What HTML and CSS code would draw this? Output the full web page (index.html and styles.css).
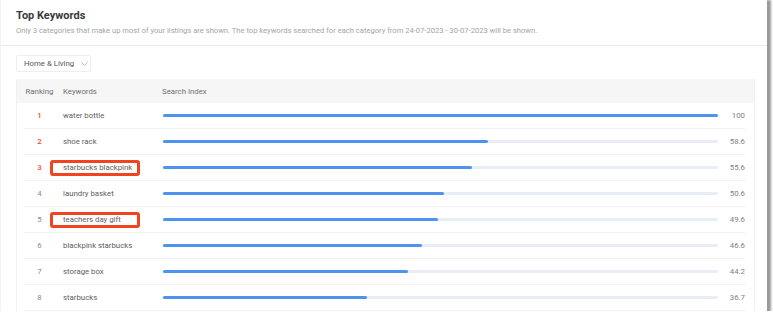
FILE: index.html
```html
<!DOCTYPE html>
<html>
<head>
<meta charset="utf-8">
<link rel="stylesheet" href="styles.css">
</head>
<body>
<div class="frame">
  <div class="head">
    <div class="title">Top Keywords</div>
    <div class="sub">Only 3 categories that make up most of your listings are shown. The top keywords searched for each category from 24-07-2023 - 30-07-2023 will be shown.</div>
  </div>
  <div class="content">
    <div class="dropdown">
      <span>Home &amp; Living</span>
      <svg class="chev" width="7" height="4" viewBox="0 0 7 4"><polyline points="0.5,0.5 3.5,3.3 6.5,0.5" fill="none" stroke="#aaa" stroke-width="0.8"/></svg>
    </div>
    <div class="table">
      <div class="thead grid">
        <div class="c-rank">Ranking</div>
        <div class="c-kw">Keywords</div>
        <div class="c-bar">Search Index</div>
        <div class="c-val"></div>
      </div>
      <div class="row grid"><div class="c-rank top">1</div><div class="c-kw">water bottle</div><div class="c-bar"><div class="track"><div class="fill" style="width:100%"></div></div></div><div class="c-val">100</div></div>
      <div class="row grid"><div class="c-rank top">2</div><div class="c-kw">shoe rack</div><div class="c-bar"><div class="track"><div class="fill" style="width:58.6%"></div></div></div><div class="c-val">58.6</div></div>
      <div class="row grid"><div class="c-rank top">3</div><div class="c-kw">starbucks blackpink<span class="mark"></span></div><div class="c-bar"><div class="track"><div class="fill" style="width:55.6%"></div></div></div><div class="c-val">55.6</div></div>
      <div class="row grid"><div class="c-rank">4</div><div class="c-kw">laundry basket</div><div class="c-bar"><div class="track"><div class="fill" style="width:50.6%"></div></div></div><div class="c-val">50.6</div></div>
      <div class="row grid"><div class="c-rank">5</div><div class="c-kw">teachers day gift<span class="mark"></span></div><div class="c-bar"><div class="track"><div class="fill" style="width:49.6%"></div></div></div><div class="c-val">49.6</div></div>
      <div class="row grid"><div class="c-rank">6</div><div class="c-kw">blackpink starbucks</div><div class="c-bar"><div class="track"><div class="fill" style="width:46.6%"></div></div></div><div class="c-val">46.6</div></div>
      <div class="row grid"><div class="c-rank">7</div><div class="c-kw">storage box</div><div class="c-bar"><div class="track"><div class="fill" style="width:44.2%"></div></div></div><div class="c-val">44.2</div></div>
      <div class="row grid"><div class="c-rank">8</div><div class="c-kw">starbucks</div><div class="c-bar"><div class="track"><div class="fill" style="width:36.7%"></div></div></div><div class="c-val">36.7</div></div>
    </div>
  </div>
</div>
</body>
</html>
```
FILE: styles.css
```css
html, body {
  margin: 0;
  padding: 0;
  background: #ffffff;
}
body {
  font-family: Roboto, "Liberation Sans", sans-serif;
  color: #555;
}
.frame {
  width: 767px;
  height: 311px;
  background: #fff;
  overflow: hidden;
  box-shadow: 2px 2px 2px 2px rgba(0,0,0,0.4);
  box-sizing: border-box;
  border-left: 1px solid #f3f3f3;
}
.head {
  height: 46px;
  box-sizing: border-box;
  padding: 9px 0 0 15px;
  border-bottom: 1px solid #ececec;
}
.title {
  font-size: 11px;
  font-weight: 700;
  color: #3a3a3a;
  line-height: 14px;
}
.sub {
  margin-top: 3px;
  font-size: 7.6px;
  color: #a5a5a5;
  line-height: 10px;
  white-space: nowrap;
}
.content {
  padding: 9px 0 0 15px;
}
.dropdown {
  width: 75px;
  height: 17px;
  box-sizing: border-box;
  border: 1px solid #eeeeee;
  border-radius: 2px;
  display: flex;
  align-items: center;
  padding-left: 7px;
  font-size: 7.8px;
  color: #555;
}
.chev {
  margin-left: 7px;
}
.table {
  margin-top: 7px;
  width: 739px;
  box-sizing: border-box;
  border-left: 1px solid #f1f1f1;
  border-right: 1px solid #f1f1f1;
}
.grid {
  display: grid;
  grid-template-columns: 31px 8px 99px 556px 27px;
  margin: 0 9px 0 7px;
  align-items: center;
}
.thead {
  margin: 0;
  padding: 0 9px 0 7px;
  height: 24px;
  background: #f6f6f6;
  font-size: 7.8px;
  color: #707070;
}
.c-rank { grid-column: 1; text-align: center; }
.c-kw { grid-column: 3; position: relative; }
.c-bar { grid-column: 4; }
.c-val { grid-column: 5; text-align: right; }
.row {
  height: 26px;
  border-bottom: 1px solid #f1f1f1;
  box-sizing: border-box;
  font-size: 7.8px;
  color: #606060;
}
.row .c-rank { color: #8a8a8a; }
.row .c-rank.top { color: #f04e2e; font-weight: 500; }
.row .c-val { color: #808080; }
.track {
  height: 3px;
  width: 555px;
  margin-left: 1px;
  background: #e9edf5;
  border-radius: 2px;
}
.fill {
  height: 3px;
  background: #4f93f0;
  border-radius: 2px;
}
.mark {
  position: absolute;
  left: -13px;
  top: 50%;
  margin-top: -8px;
  width: 90px;
  height: 16px;
  box-sizing: border-box;
  border: 3px solid #f0431f;
  border-radius: 3px;
}
```
